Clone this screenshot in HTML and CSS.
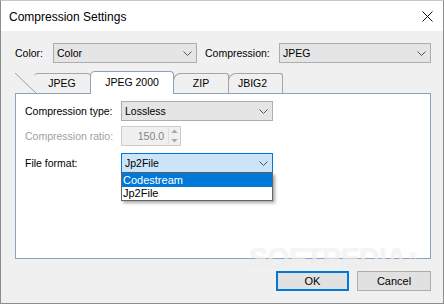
FILE: index.html
```html
<!DOCTYPE html>
<html lang="en">
<head>
    <meta charset="UTF-8">
    <title>Compression Settings</title>
    <link rel="stylesheet" href="styles.css">
</head>
<body>
    <div class="window">
        <div class="titlebar">
            <span class="title">Compression Settings</span>
            <svg class="close" width="11" height="11" viewBox="0 0 11 11">
                <path d="M0.5 0.5 L10.5 10.5 M10.5 0.5 L0.5 10.5" stroke="#111" stroke-width="1" fill="none"/>
            </svg>
        </div>
        <div class="content">
            <div class="top-row">
                <span class="label">Color:</span>
                <div class="combo">
                    <span>Color</span>
                    <svg class="chevron" width="9" height="5" viewBox="0 0 9 5"><polyline points="0.5,0.5 4.5,4.5 8.5,0.5" fill="none" stroke="#555" stroke-width="1"/></svg>
                </div>
                <span class="label label-pad">Compression:</span>
                <div class="combo">
                    <span>JPEG</span>
                    <svg class="chevron" width="9" height="5" viewBox="0 0 9 5"><polyline points="0.5,0.5 4.5,4.5 8.5,0.5" fill="none" stroke="#555" stroke-width="1"/></svg>
                </div>
            </div>

            <div class="tabs">
                <div class="tab tab-first">JPEG</div>
                <div class="tab tab-active">JPEG 2000</div>
                <div class="tab tab-zip">ZIP</div>
                <div class="tab tab-jbig">JBIG2</div>
            </div>

            <div class="panel">
                <div class="field">
                    <span class="label">Compression type:</span>
                    <div class="combo combo-wide">
                        <span>Lossless</span>
                        <svg class="chevron" width="9" height="5" viewBox="0 0 9 5"><polyline points="0.5,0.5 4.5,4.5 8.5,0.5" fill="none" stroke="#555" stroke-width="1"/></svg>
                    </div>
                </div>
                <div class="field field-disabled">
                    <span class="label">Compression ratio:</span>
                    <div class="spin">
                        <span class="spin-value">150.0</span>
                        <div class="spin-btns">
                            <svg width="9" height="9" viewBox="0 0 9 9"><polygon points="1.5,6 4.5,2.5 7.5,6" fill="#a6a6a6"/></svg>
                            <svg width="9" height="9" viewBox="0 0 9 9"><polygon points="1.5,3 4.5,6.5 7.5,3" fill="#a6a6a6"/></svg>
                        </div>
                    </div>
                </div>
                <div class="field field-format">
                    <span class="label">File format:</span>
                    <div class="combo combo-wide combo-focus">
                        <span>Jp2File</span>
                        <svg class="chevron" width="9" height="5" viewBox="0 0 9 5"><polyline points="0.5,0.5 4.5,4.5 8.5,0.5" fill="none" stroke="#555" stroke-width="1"/></svg>
                        <div class="dropdown">
                            <div class="option option-selected">Codestream</div>
                            <div class="option">Jp2File</div>
                        </div>
                    </div>
                </div>
            </div>

            <div class="buttons">
                <button class="btn btn-default">OK</button>
                <button class="btn btn-cancel">Cancel</button>
            </div>
        </div>
        <div class="watermark">SOFTPEDIA<span class="reg">®</span></div>
    </div>
</body>
</html>
```

FILE: styles.css
```css
body {
    margin: 0;
    background-color: #fff;
    font-family: 'Liberation Sans', Arial, sans-serif;
    font-size: 10.5px;
    color: #000;
}

.window {
    position: relative;
    width: 444px;
    height: 304px;
    box-sizing: border-box;
    border: 1px solid #8c8c8c;
    border-top-color: #c8c8c8;
    background-color: #f0f0f0;
    overflow: hidden;
}

/* title bar */
.titlebar {
    height: 30px;
    background-color: #fff;
    display: flex;
    align-items: center;
    justify-content: space-between;
    padding: 0 10px 0 8px;
}

.title {
    font-size: 12px;
    color: #000;
    padding-top: 1px;
}

.close {
    display: block;
    margin-top: 1px;
}

.content {
    padding: 12px 12px 0 14px;
}

/* top row */
.top-row {
    display: grid;
    grid-template-columns: 38px 144px 82px 1fr;
    align-items: center;
    height: 20px;
}

.label {
    white-space: nowrap;
}

.label-pad {
    padding-left: 8px;
}

.combo {
    position: relative;
    height: 20px;
    box-sizing: border-box;
    border: 1px solid #adadad;
    background-color: #e5e5e5;
    display: flex;
    align-items: center;
    justify-content: space-between;
    padding: 0 4px 0 3px;
}

.chevron {
    display: block;
}

/* tabs */
.tabs {
    display: flex;
    align-items: flex-end;
    height: 22px;
    margin-top: 8px;
    position: relative;
    z-index: 2;
}

.tab {
    position: relative;
    height: 20px;
    box-sizing: border-box;
    border: 1px solid #a5a5a5;
    border-bottom: none;
    border-radius: 8px 3px 0 0;
    background-color: #f0f0f0;
    display: flex;
    align-items: center;
    justify-content: center;
    padding-bottom: 1px;
    margin-left: -1px;
}

.tab-first {
    width: 76px;
    margin-left: 0;
    padding-left: 19px;
    border-left: none;
    border-top: none;
    border-radius: 0 3px 0 0;
}

.tab-first::before {
    content: '';
    position: absolute;
    left: 0;
    top: 0;
    width: 21px;
    height: 20px;
    background: linear-gradient(to top right, transparent calc(50% - 0.8px), #a5a5a5 50%, transparent calc(50% + 0.8px));
}

.tab-first::after {
    content: '';
    position: absolute;
    left: 19px;
    right: 0;
    top: 0;
    height: 3px;
    border-top: 1px solid #a5a5a5;
    border-radius: 4px 3px 0 0;
}

.tab-active {
    width: 84px;
    height: 23px;
    margin-bottom: -1px;
    padding-bottom: 3px;
    background-color: #fff;
    border-color: #8ea3bb;
    border-radius: 5px 4px 0 0;
    z-index: 3;
}

.tab-zip {
    width: 56px;
}

.tab-jbig {
    width: 55px;
    padding-right: 6px;
}

/* panel */
.panel {
    height: 166px;
    box-sizing: border-box;
    border: 1px solid #8ea3bb;
    background-color: #fff;
    padding: 7px 9px 0 9px;
    display: flex;
    flex-direction: column;
    gap: 5px;
}

.field {
    display: grid;
    grid-template-columns: 96px 152px;
    align-items: center;
    height: 20px;
}

.field-disabled .label {
    color: #a0a0a0;
}

.field-format {
    margin-top: 2px;
}

.combo-focus {
    border-color: #0078d7;
    background-color: #cce4f7;
}

.spin {
    width: 60px;
    height: 20px;
    box-sizing: border-box;
    border: 1px solid #cccccc;
    background-color: #f0f0f0;
    display: flex;
    align-items: center;
    justify-content: flex-end;
}

.spin-value {
    color: #838383;
    padding-right: 4px;
}

.spin-btns {
    width: 10px;
    height: 18px;
    margin-right: 1px;
    display: flex;
    flex-direction: column;
    align-items: center;
    justify-content: space-between;
    border-left: 1px solid #e0e0e0;
}

.spin-btns svg {
    display: block;
}

/* dropdown list */
.dropdown {
    position: absolute;
    left: -1px;
    top: 19px;
    width: 152px;
    box-sizing: border-box;
    border: 1px solid #646464;
    background-color: #fff;
    box-shadow: 2px 2px 3px rgba(0, 0, 0, 0.35);
    z-index: 5;
}

.option {
    height: 13px;
    line-height: 13px;
    padding-left: 1px;
    font-size: 11px;
}

.option-selected {
    background-color: #0078d7;
    color: #fff;
}

/* buttons */
.buttons {
    display: flex;
    justify-content: flex-end;
    gap: 8px;
    margin-top: 12px;
}

.btn {
    height: 20px;
    box-sizing: border-box;
    background-color: #e1e1e1;
    border: 1px solid #adadad;
    font-family: 'Liberation Sans', Arial, sans-serif;
    font-size: 11px;
    color: #000;
    padding: 0;
}

.btn-default {
    width: 73px;
    border: 2px solid #0078d7;
}

.btn-cancel {
    width: 74px;
}

/* watermark */
.watermark {
    position: absolute;
    left: 248px;
    top: 246px;
    font-size: 29px;
    line-height: 22px;
    font-weight: bold;
    letter-spacing: -1px;
    color: rgba(255, 255, 255, 0.6);
    text-shadow: 0 0 1px rgba(0, 0, 0, 0.1);
    pointer-events: none;
    z-index: 10;
}

.reg {
    font-size: 11px;
    vertical-align: top;
    position: relative;
    top: -2px;
    left: 3px;
}
```
